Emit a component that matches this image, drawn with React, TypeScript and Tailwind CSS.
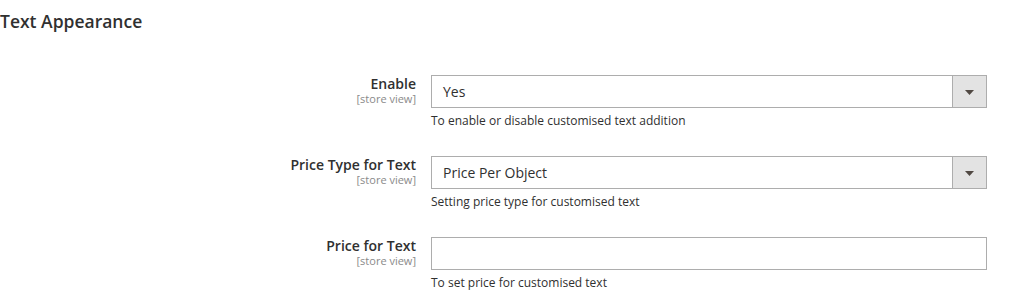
import React from "react";

type Field = {
  label: string;
  note: string;
  kind: "select" | "input";
  value?: string;
};

const fields: Field[] = [
  { label: "Enable", note: "To enable or disable customised text addition", kind: "select", value: "Yes" },
  { label: "Price Type for Text", note: "Setting price type for customised text", kind: "select", value: "Price Per Object" },
  { label: "Price for Text", note: "To set price for customised text", kind: "input" },
];

function SelectBox({ value }: { value: string }) {
  return (
    <div className="flex h-[33px] w-full border border-[#adadad] bg-white">
      <div className="flex-1 pl-[11px] text-[14px] leading-[31px] text-[#303030]">{value}</div>
      <div className="flex w-[34px] items-center justify-center border-l border-[#adadad] bg-[#e3e3e3]">
        <svg width="9" height="5" viewBox="0 0 9 5" className="mt-[1px]">
          <path d="M0 0 H9 L4.5 5 Z" fill="#514943" />
        </svg>
      </div>
    </div>
  );
}

function Row({ field }: { field: Field }) {
  return (
    <div className="flex items-start">
      <div className="w-[416px] shrink-0 pt-[1px] text-right">
        <div className="text-[14px] font-semibold leading-[16px] text-[#303030]">{field.label}</div>
        <div className="text-[11px] leading-[13px] text-[#8a8a8a]">[store view]</div>
      </div>
      <div className="ml-[15px] w-[556px]">
        {field.kind === "select" ? (
          <SelectBox value={field.value ?? ""} />
        ) : (
          <div className="h-[33px] w-full border border-[#adadad] bg-white" />
        )}
        <div className="mt-[5px] text-[12px] leading-[16px] text-[#303030]">{field.note}</div>
      </div>
    </div>
  );
}

export default function App() {
  return (
    <div className="h-[302px] w-[1015px] overflow-hidden bg-white font-['Open_Sans',sans-serif]">
      <h2 className="pt-[9px] text-[17.5px] font-semibold leading-[24px] text-[#303030]">Text Appearance</h2>
      <div className="mt-[42px] flex flex-col gap-[27px]">
        {fields.map((f) => (
          <Row key={f.label} field={f} />
        ))}
      </div>
    </div>
  );
}
